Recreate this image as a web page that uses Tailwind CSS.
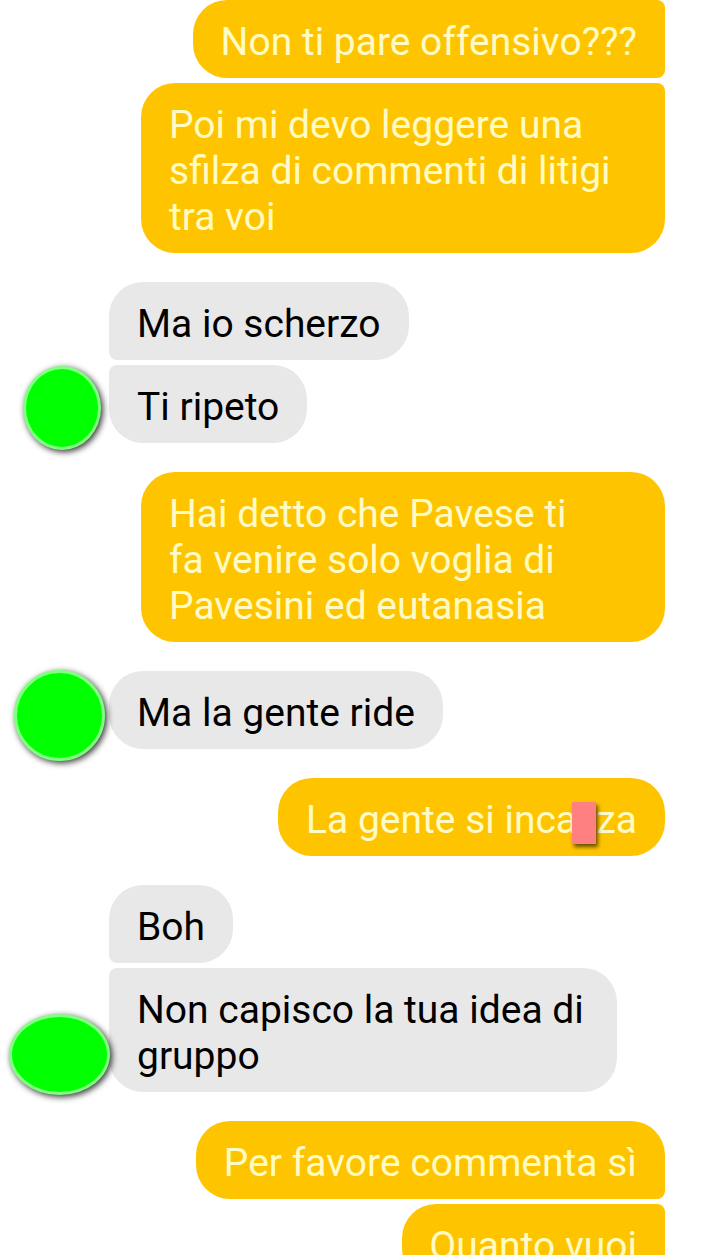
<!DOCTYPE html>
<html lang="it">

<head>
  <meta charset="UTF-8">
  <meta name="viewport" content="width=device-width, initial-scale=1.0">
  <title>Chat</title>
  <script src="https://cdn.jsdelivr.net/npm/@tailwindcss/browser@4"></script>
</head>

<body class="bg-white">
  <main class="flex h-screen flex-col gap-[29px] overflow-hidden pr-[55px] pl-[109px] font-['Roboto','Liberation_Sans',sans-serif] text-[39px] leading-[46px]">

    <section class="flex shrink-0 flex-col items-end gap-[5px] text-[#fffbc4]">
      <p class="rounded-[34px] rounded-r-lg bg-[#ffc400] px-7 pt-[19px] pb-[13px]">Non ti pare offensivo???</p>
      <p class="max-w-[524px] rounded-[34px] rounded-tr-lg bg-[#ffc400] px-7 pt-[19px] pb-[13px]">Poi mi devo leggere una sfilza di commenti di litigi tra voi</p>
    </section>

    <section class="relative flex shrink-0 flex-col items-start gap-[5px] text-black">
      <p class="rounded-[34px] rounded-bl-lg bg-[#e8e8e8] px-7 pt-[19px] pb-[13px]">Ma io scherzo</p>
      <p class="rounded-[34px] rounded-tl-lg bg-[#e8e8e8] px-7 pt-[19px] pb-[13px]">Ti ripeto</p>
      <!-- covered avatar -->
      <span class="absolute -bottom-[7px] -left-[86px] h-[84px] w-[78px] rounded-[50%] border-3 border-[#80ff80] bg-[#00ff00] shadow-[2px_2px_6px_rgba(0,0,0,0.8)]"></span>
    </section>

    <section class="flex shrink-0 flex-col items-end gap-[5px] text-[#fffbc4]">
      <p class="w-[524px] rounded-[34px] bg-[#ffc400] px-7 pt-[19px] pb-[13px]">Hai detto che Pavese ti<br>fa venire solo voglia di<br>Pavesini ed eutanasia</p>
    </section>

    <section class="relative flex shrink-0 flex-col items-start gap-[5px] text-black">
      <p class="rounded-[34px] bg-[#e8e8e8] px-7 pt-[19px] pb-[13px]">Ma la gente ride</p>
      <span class="absolute -bottom-3 -left-[95px] h-[91px] w-[91px] rounded-[50%] border-3 border-[#80ff80] bg-[#00ff00] shadow-[2px_2px_6px_rgba(0,0,0,0.8)]"></span>
    </section>

    <section class="flex shrink-0 flex-col items-end gap-[5px] text-[#fffbc4]">
      <p class="rounded-[34px] bg-[#ffc400] px-7 pt-[19px] pb-[13px]">La gente si inca<span class="relative">z<span class="absolute top-[5px] right-0 h-[42px] w-6 bg-[#ff8080] shadow-[2px_3px_4px_rgba(0,0,0,0.6)]"></span></span>za</p>
    </section>

    <section class="relative flex shrink-0 flex-col items-start gap-[5px] text-black">
      <p class="rounded-[34px] rounded-bl-lg bg-[#e8e8e8] px-7 pt-[19px] pb-[13px]">Boh</p>
      <p class="max-w-[508px] rounded-[34px] rounded-tl-lg bg-[#e8e8e8] px-7 pt-[19px] pb-[13px]">Non capisco la tua idea di gruppo</p>
      <span class="absolute -bottom-[3px] -left-[100px] h-[81px] w-[101px] rounded-[50%] border-3 border-[#80ff80] bg-[#00ff00] shadow-[2px_2px_6px_rgba(0,0,0,0.8)]"></span>
    </section>

    <section class="flex shrink-0 flex-col items-end gap-[5px] text-[#fffbc4]">
      <p class="rounded-[34px] rounded-br-lg bg-[#ffc400] px-7 pt-[19px] pb-[13px]">Per favore commenta sì</p>
      <p class="rounded-[34px] rounded-r-lg bg-[#ffc400] px-7 pt-[19px] pb-[13px]">Quanto vuoi</p>
    </section>

  </main>
</body>

</html>
